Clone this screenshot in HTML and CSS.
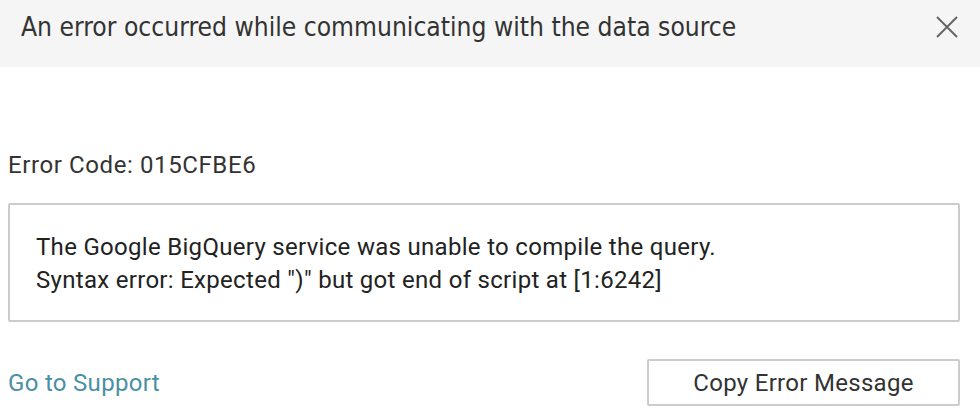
FILE: index.html
```html
<!DOCTYPE html>
<html>
<head>
<meta charset="utf-8">
<link rel="stylesheet" href="styles.css">
</head>
<body>
<div class="dialog">
  <header class="header">
    <h1 class="title">An error occurred while communicating with the data source</h1>
    <button class="close" aria-label="Close">
      <svg width="22" height="22" viewBox="0 0 22 22"><path d="M1 1 L21 21 M21 1 L1 21" stroke="#666" stroke-width="2" fill="none"/></svg>
    </button>
  </header>
  <main class="content">
    <p class="code">Error Code: 015CFBE6</p>
    <div class="message">
      <p>The Google BigQuery service was unable to compile the query.</p>
      <p>Syntax error: Expected ")" but got end of script at [1:6242]</p>
    </div>
    <div class="actions">
      <a class="support" href="#">Go to Support</a>
      <button class="copy">Copy Error Message</button>
    </div>
  </main>
</div>
</body>
</html>
```
FILE: styles.css
```css
html, body {
  margin: 0;
  padding: 0;
  background: #fff;
}
body {
  font-family: Roboto, "Liberation Sans", sans-serif;
  color: #333;
  letter-spacing: 0.3px;
}
.dialog {
  width: 980px;
  height: 416px;
  overflow: hidden;
}
.header {
  height: 67px;
  background: #f5f5f5;
  display: flex;
  align-items: flex-start;
  justify-content: space-between;
  padding: 0 22px 0 21px;
}
.title {
  margin: 12px 0 0;
  font-family: "DejaVu Sans Condensed", "DejaVu Sans", sans-serif;
  font-weight: normal;
  font-size: 26.2px;
  line-height: 30px;
  letter-spacing: 0;
  color: #333;
}
.close {
  border: 0;
  background: none;
  padding: 0;
  margin-top: 16px;
  width: 22px;
  height: 22px;
  cursor: pointer;
}
.content {
  padding: 0 20px 0 8px;
}
.code {
  margin: 84px 0 0;
  font-size: 24px;
  line-height: 28px;
  letter-spacing: 0.6px;
}
.message {
  margin-top: 24px;
  border: 2px solid #ccc;
  border-radius: 2px;
  height: 119px;
  box-sizing: border-box;
  padding: 26px 26px 0;
}
.message p {
  margin: 0;
  font-size: 24px;
  line-height: 33px;
  color: #222;
}
.actions {
  margin-top: 37px;
  display: flex;
  justify-content: space-between;
  align-items: center;
}
.support {
  font-size: 24px;
  color: #4a90a4;
  text-decoration: none;
}
.copy {
  width: 313px;
  height: 47px;
  border: 2px solid #ccc;
  border-radius: 2px;
  background: #fff;
  font-family: Roboto, "Liberation Sans", sans-serif;
  font-size: 24px;
  letter-spacing: 0.3px;
  color: #333;
}
```
